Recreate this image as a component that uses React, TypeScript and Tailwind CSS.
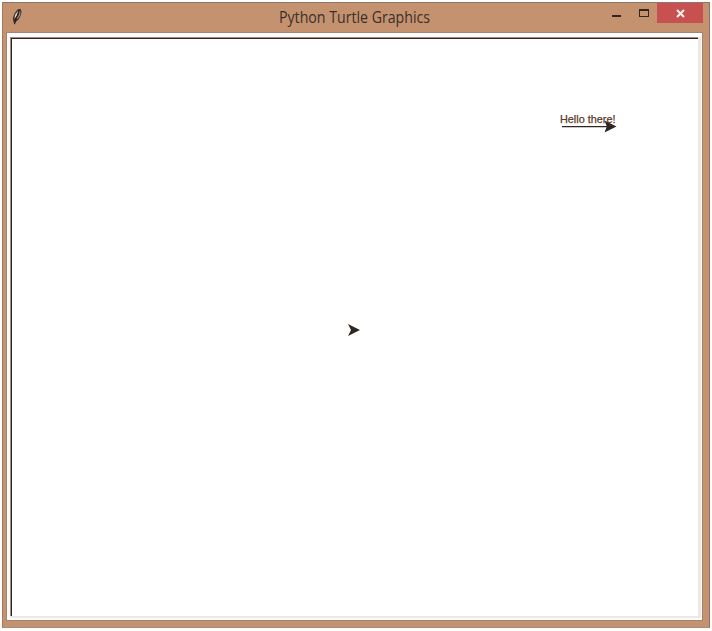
function FeatherIcon() {
  return (
    <svg className="mt-[5px] ml-[8px] h-[18px] w-[12px]" viewBox="11 8 12 18" fill="none">
      <path d="M14.5 24.5 13.5 22 12.8 18 14.5 13.5 17.5 9.5 20.5 8.8 21.6 12 20.4 16 18.4 19.8 15.8 21.8Z" fill="#3b302a" />
      <path d="M14.2 19 15.2 14.5 18.2 10.8 17.2 15.2Z" fill="#e2cfc2" />
      <path d="M17 18.8 19.4 15 20.1 11.5" stroke="#a18f84" strokeWidth="1.1" />
      <path d="M14.6 24.2 15.4 20 18.8 11.6" stroke="#241c18" strokeWidth="1" />
    </svg>
  );
}

function TitleBar() {
  return (
    <header className="flex h-[29px] shrink-0 items-start">
      <FeatherIcon />
      <h1 className="flex-1 pt-[5px] pl-[256px] font-normal">
        <svg className="block h-5 w-[152px] overflow-visible" fill="#392f29">
          <text x="0" y="15.4" fontSize="15.4" textLength="151" lengthAdjust="spacingAndGlyphs">Python Turtle Graphics</text>
        </svg>
      </h1>
      <div className="flex h-5 shrink-0">
        <button className="h-5 w-[27px]" aria-label="Minimize">
          <svg className="block h-5 w-[27px]"><path d="M0 12h9v2H0z" fill="#30261f" /></svg>
        </button>
        <button className="h-5 w-[18px]" aria-label="Maximize">
          <svg className="block h-5 w-[18px]"><path d="M0 6h10v8H0zM1 8v5h8V8z" fill="#30261f" fillRule="evenodd" /></svg>
        </button>
        <button className="h-5 w-[46px] bg-[#c75050]" aria-label="Close">
          <svg className="block h-5 w-[46px]"><path d="m20 7 7 7m0-7-7 7" stroke="#fff4ed" strokeWidth="2" /></svg>
        </button>
      </div>
      <div className="w-[6px] shrink-0" />
    </header>
  );
}

function TurtleCanvas() {
  return (
    <svg className="block h-full w-full" viewBox="12 39 686 577" fill="#30261f">
      <text x="560" y="123" fontSize="11" fontFamily="Liberation Sans, Arial, sans-serif" fill="#5c3a28" stroke="#5c3a28" strokeWidth="0.25" textLength="55.5" lengthAdjust="spacingAndGlyphs">
        Hello there!
      </text>
      <path d="M562 126h48v1.3h-48z" />
      <path d="m604.5 120.5 12 6-12 6 2.3-6z" />
      <path d="m348 324 12 6-12 6 3-6z" />
    </svg>
  );
}

export default function App() {
  return (
    <div className="h-[631px] w-[712px] overflow-hidden bg-white pt-[2px] pl-[2px] font-['Open_Sans','Noto_Sans',sans-serif]">
      <div className="flex h-[626px] w-[708px] flex-col border border-[#a7785c] border-t-[#8c7668] border-r-[#8d7466] border-b-[#a98c7b] bg-[#c59270]">
        <TitleBar />
        <main className="mr-[6px] mb-[6px] ml-[3px] flex h-[589px] flex-none border border-[#a58370] bg-white pt-1 pr-[1px] pb-[2px] pl-[3px]">
          <div className="flex-1 border-r-[3px] border-b-2 border-[#f0e6e4]">
            <div className="h-full border-t border-l border-[#a78979]">
              <div className="h-full border-t border-l border-[#35241e]">
                <TurtleCanvas />
              </div>
            </div>
          </div>
        </main>
      </div>
    </div>
  );
}
